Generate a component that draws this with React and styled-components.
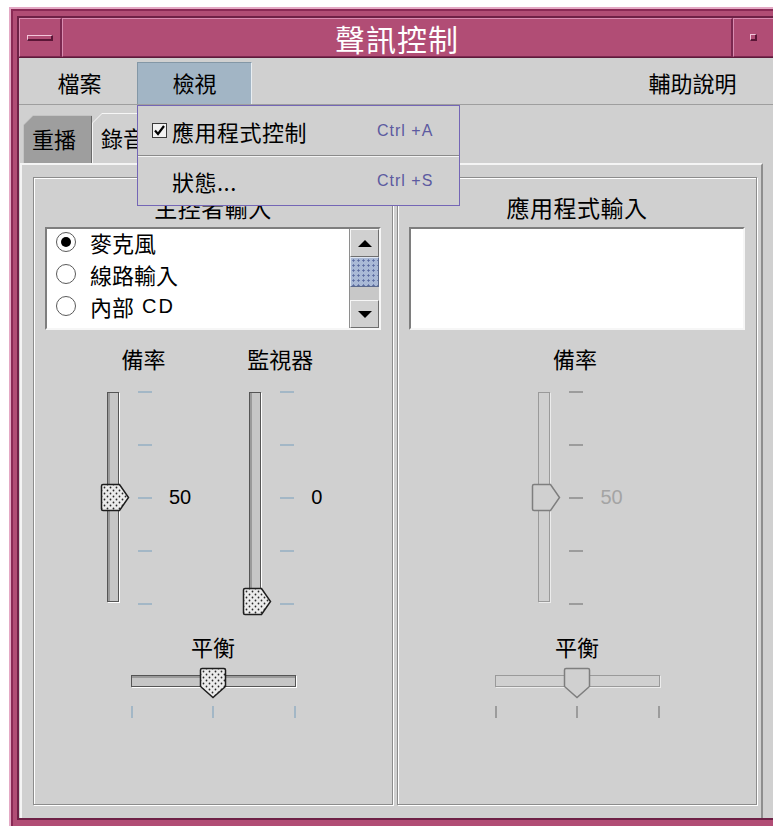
import React from 'react';
import styled, { createGlobalStyle } from 'styled-components';

const CJK = `"Noto Sans CJK TC", "Noto Sans CJK SC", sans-serif`;
const LATIN = `"Liberation Sans", "Noto Sans CJK TC", sans-serif`;

const GlobalStyle = createGlobalStyle`
  html, body {
    margin: 0;
    padding: 0;
    background: #ffffff;
    overflow: hidden;
  }
  body {
    font-family: ${CJK};
    color: #000;
  }
`;

// the window runs past the right edge of the page, as in the screenshot
const Window = styled.div`
  margin: 7px 0 0 9px;
  width: 800px;
  height: 822px;
  box-sizing: border-box;
  display: flex;
  background: #b14d75;
  border-top: 2px solid #e4a9c5;
  border-left: 2px solid #e4a9c5;
  box-shadow: inset 2px 2px 0 #8a2a55;
  padding: 7px 0 9px 6px;
`;

const Inner = styled.div`
  flex: 1;
  min-width: 0;
  display: flex;
  flex-direction: column;
  background: #d0d0d0;
  border-top: 2px solid #6e2146;
  border-left: 2px solid #6e2146;
  border-bottom: 2px solid #6e2146;
`;

const TitleBar = styled.div`
  height: 39px;
  display: flex;
  background: #b14d75;
  border-bottom: 1px solid #5e1a3a;
`;

const TitleButton = styled.div`
  width: ${p => p.$w}px;
  box-sizing: border-box;
  display: flex;
  align-items: center;
  justify-content: ${p => (p.$start ? 'flex-start' : 'center')};
  padding-left: ${p => (p.$start ? 16 : 0)}px;
  border-top: 1px solid #d98cb0;
  border-left: 1px solid #d98cb0;
  border-right: 2px solid #7c2850;
  border-bottom: 1px solid #7c2850;
`;

const MinBar = styled.span`
  width: 26px;
  height: 6px;
  box-sizing: border-box;
  border-top: 1px solid #f3c6da;
  border-left: 1px solid #f3c6da;
  border-right: 2px solid #5a1536;
  border-bottom: 2px solid #5a1536;
`;

const MaxDot = styled.span`
  width: 7px;
  height: 7px;
  box-sizing: border-box;
  border-top: 1px solid #f3c6da;
  border-left: 1px solid #f3c6da;
  border-right: 2px solid #5a1536;
  border-bottom: 2px solid #5a1536;
`;

const TitleText = styled.div`
  flex: 1;
  display: flex;
  align-items: center;
  justify-content: center;
  color: #ffffff;
  font-size: 30px;
  letter-spacing: 1px;
  border-top: 1px solid #d98cb0;
  border-left: 1px solid #d98cb0;
  border-right: 2px solid #7c2850;
  border-bottom: 1px solid #7c2850;
`;

const MenuBar = styled.div`
  height: 47px;
  box-sizing: border-box;
  display: flex;
  align-items: flex-end;
  padding-left: 3px;
  border-bottom: 1px solid #9e9e9e;
  position: relative;
  z-index: 5;
`;

const MenuItem = styled.div`
  position: relative;
  width: 115px;
  height: 42px;
  box-sizing: border-box;
  display: flex;
  align-items: center;
  justify-content: center;
  padding-bottom: 4px;
  font-size: 22px;
  margin-left: ${p => (p.$push ? 'auto' : '0')};
  margin-right: ${p => (p.$push ? '59px' : '0')};
  background: ${p => (p.$active ? '#a2b5c5' : 'transparent')};
  border-top: 1px solid ${p => (p.$active ? '#8397a6' : 'transparent')};
  border-left: 1px solid ${p => (p.$active ? '#8397a6' : 'transparent')};
  border-right: 1px solid ${p => (p.$active ? '#e8eef2' : 'transparent')};
`;

const Dropdown = styled.div`
  position: absolute;
  top: calc(100% + 1px);
  left: -1px;
  width: 323px;
  box-sizing: border-box;
  background: #d0d0d0;
  border: 1px solid #7466b6;
  display: flex;
  flex-direction: column;
`;

const DropItem = styled.div`
  height: 49px;
  display: flex;
  align-items: center;
  padding-left: ${p => (p.$indent ? 34 : 14)}px;
  font-size: 22px;
  border-top: ${p => (p.$sep ? '1px solid #8a8a8a' : 'none')};
  box-shadow: ${p => (p.$sep ? 'inset 0 1px 0 #f4f4f4' : 'none')};
`;

const CheckBox = styled.span`
  width: 15px;
  height: 15px;
  margin-right: 5px;
  display: flex;
`;

const DropLabel = styled.span`
  flex: 1;
  letter-spacing: 0.5px;
`;

const Shortcut = styled.span`
  width: 82px;
  font-family: ${LATIN};
  font-size: 16px;
  letter-spacing: 1px;
  color: #5c5aa0;
`;

const TabStrip = styled.div`
  height: 58px;
  display: flex;
  align-items: flex-end;
  padding-left: 4px;
`;

const Tab = styled.div`
  height: ${p => (p.$active ? 49 : 47)}px;
  padding: 1px 0 0 1px;
  background: ${p => (p.$active ? '#f6f6f6' : '#c4c4c4')};
  clip-path: polygon(0 10px, 10px 0, 100% 0, 100% 100%, 0 100%);
`;

const TabFace = styled.div`
  height: 100%;
  box-sizing: border-box;
  display: flex;
  align-items: center;
  padding: 0 15px 4px 8px;
  font-size: 22px;
  background: ${p => (p.$active ? '#d0d0d0' : '#9e9e9e')};
  border-right: 1px solid ${p => (p.$active ? '#7a7a7a' : '#6a6a6a')};
  clip-path: polygon(0 9px, 9px 0, 100% 0, 100% 100%, 0 100%);
`;

const Pane = styled.div`
  flex: 1;
  margin: 0 46px 0 1px;
  display: flex;
  gap: 4px;
  padding: 12px 4px 13px 11px;
  border-top: 2px solid #f4f4f4;
  border-left: 2px solid #f4f4f4;
  border-right: 2px solid #8e8e8e;
`;

const Group = styled.div`
  flex: 1;
  display: flex;
  flex-direction: column;
  padding: 16px 11px 0;
  border: 1px solid #8c8c8c;
  box-shadow: inset 1px 1px 0 #ffffff, 1px 1px 0 #ffffff;
`;

const GroupTitle = styled.div`
  height: 26px;
  line-height: 26px;
  text-align: center;
  font-size: 23px;
  letter-spacing: 0.5px;
`;

const ListBox = styled.div`
  margin-top: 7px;
  height: 103px;
  box-sizing: border-box;
  display: flex;
  background: #ffffff;
  border-top: 2px solid #7e7e7e;
  border-left: 2px solid #7e7e7e;
  border-bottom: 2px solid #f6f6f6;
  border-right: 2px solid #f6f6f6;
`;

const List = styled.div`
  flex: 1;
  display: flex;
  flex-direction: column;
  margin-top: -3px;
  padding-left: 9px;
`;

const ListRow = styled.div`
  height: 32px;
  display: flex;
  align-items: center;
  font-size: 22px;
`;

const Radio = styled.span`
  width: 20px;
  height: 20px;
  box-sizing: border-box;
  margin-right: 14px;
  border-radius: 50%;
  border: 1.5px solid #5a5a5a;
  display: flex;
  align-items: center;
  justify-content: center;
  &::after {
    content: '';
    width: 10px;
    height: 10px;
    border-radius: 50%;
    background: ${p => (p.$on ? '#000' : 'transparent')};
  }
`;

const CDText = styled.span`
  font-family: ${LATIN};
  font-size: 20px;
  margin-left: 8px;
  letter-spacing: 2px;
`;

const ScrollBar = styled.div`
  width: 29px;
  display: flex;
  flex-direction: column;
  background: #c4c4c4;
  border-left: 1px solid #8e8e8e;
`;

const ScrollButton = styled.div`
  height: 28px;
  box-sizing: border-box;
  display: flex;
  align-items: center;
  justify-content: center;
  background: #d0d0d0;
  border-top: 1px solid #f6f6f6;
  border-left: 1px solid #f6f6f6;
  border-right: 1px solid #6e6e6e;
  border-bottom: 1px solid #6e6e6e;
  &::after {
    content: '';
    border-left: 7px solid transparent;
    border-right: 7px solid transparent;
    ${p => (p.$down ? 'border-top: 7px solid #000;' : 'border-bottom: 7px solid #000;')}
  }
`;

const ScrollThumb = styled.div`
  height: 30px;
  box-sizing: border-box;
  background-color: #a9b9d6;
  background-image: radial-gradient(#5a6aa0 0.9px, transparent 1.3px);
  background-size: 5px 5px;
  border-top: 1px solid #dfe6f2;
  border-left: 1px solid #dfe6f2;
  border-right: 1px solid #5c6a8c;
  border-bottom: 1px solid #5c6a8c;
`;

const ScrollTrack = styled.div`
  flex: 1;
  background: #c8c8c8;
`;

const SliderRow = styled.div`
  margin-top: 16px;
  display: flex;
  align-items: flex-start;
  justify-content: ${p => (p.$center ? 'center' : 'flex-start')};
  padding-left: ${p => (p.$center ? 0 : 55)}px;
  gap: 51px;
`;

const SliderBlock = styled.div`
  display: flex;
  flex-direction: column;
`;

const SliderLabel = styled.div`
  height: 24px;
  line-height: 24px;
  text-align: center;
  font-size: 22px;
  padding-right: 4px;
  white-space: nowrap;
`;

const SliderBody = styled.div`
  margin-top: 22px;
  height: 212px;
  display: flex;
  align-items: flex-start;
`;

const TrackArea = styled.div`
  position: relative;
  width: 30px;
  height: 212px;
`;

const VTrack = styled.div`
  margin-left: 7px;
  width: 12px;
  height: 210px;
  box-sizing: border-box;
  background: ${p => (p.$off ? '#d0d0d0' : '#c6c6c6')};
  border: 1px solid ${p => (p.$off ? '#9a9a9a' : '#555555')};
  box-shadow: ${p => (p.$off ? '1px 1px 0 #ececec' : 'inset 2px 0 0 #9a9a9a, 1px 1px 0 #ffffff')};
`;

const ThumbSpot = styled.div`
  position: absolute;
  left: 0;
  line-height: 0;
`;

const Ticks = styled.div`
  margin: -1px 0 0 8px;
  width: 14px;
  height: 214px;
  display: flex;
  flex-direction: column;
  justify-content: space-between;
`;

const Tick = styled.span`
  display: block;
  width: 14px;
  height: 2px;
  background: ${p => (p.$off ? '#9c9c9c' : '#a3b7c6')};
`;

const Value = styled.div`
  margin-left: 17px;
  height: 210px;
  display: flex;
  align-items: center;
  font-family: ${LATIN};
  font-size: 20px;
  color: ${p => (p.$off ? '#a4a4a4' : '#000')};
`;

const BalanceLabel = styled.div`
  margin-top: 30px;
  height: 24px;
  line-height: 24px;
  text-align: center;
  font-size: 22px;
`;

const HSlider = styled.div`
  position: relative;
  align-self: center;
  margin-top: 9px;
  width: 165px;
  height: 31px;
`;

const HTrack = styled.div`
  margin-top: 8px;
  height: 12px;
  box-sizing: border-box;
  background: ${p => (p.$off ? '#d0d0d0' : '#c6c6c6')};
  border: 1px solid ${p => (p.$off ? '#9a9a9a' : '#555555')};
  box-shadow: ${p => (p.$off ? '1px 1px 0 #ececec' : 'inset 0 2px 0 #9a9a9a, 1px 1px 0 #ffffff')};
`;

const HTicks = styled.div`
  align-self: center;
  margin-top: 8px;
  width: 165px;
  height: 12px;
  display: flex;
  justify-content: space-between;
`;

const HTick = styled.span`
  width: 2px;
  height: 12px;
  background: ${p => (p.$off ? '#9c9c9c' : '#a3b7c6')};
`;

function Dots({ id }) {
  return (
    <pattern id={id} width="6" height="6" patternUnits="userSpaceOnUse">
      <rect width="6" height="6" fill="#ececec" />
      <circle cx="1.5" cy="1.5" r="0.9" fill="#2a2a2a" />
      <circle cx="4.5" cy="4.5" r="0.9" fill="#2a2a2a" />
    </pattern>
  );
}

function VThumb({ id, off }) {
  return (
    <svg width="30" height="29" viewBox="0 0 30 29">
      <defs><Dots id={id} /></defs>
      <path
        d="M1.5 3 Q1.5 1.5 3 1.5 H19.5 L28.5 14.5 L19.5 27.5 H3 Q1.5 27.5 1.5 26 Z"
        fill={off ? '#d0d0d0' : `url(#${id})`}
        stroke={off ? '#7e7e7e' : '#1e1e1e'}
        strokeWidth="1.5"
      />
    </svg>
  );
}

function HThumb({ id, off }) {
  return (
    <svg width="28" height="32" viewBox="0 0 28 32">
      <defs><Dots id={id} /></defs>
      <path
        d="M3 1.5 H25 Q26.5 1.5 26.5 3 V19.5 L14 30.5 L1.5 19.5 V3 Q1.5 1.5 3 1.5 Z"
        fill={off ? '#d0d0d0' : `url(#${id})`}
        stroke={off ? '#7e7e7e' : '#1e1e1e'}
        strokeWidth="1.5"
      />
    </svg>
  );
}

function VSlider({ label, value, off, id }) {
  const tip = 1 + (1 - value / 100) * 208;
  return (
    <SliderBlock>
      <SliderLabel>{label}</SliderLabel>
      <SliderBody>
        <TrackArea>
          <VTrack $off={off} />
          <ThumbSpot style={{ top: tip - 14 }}>
            <VThumb id={id} off={off} />
          </ThumbSpot>
        </TrackArea>
        <Ticks>
          {[0, 1, 2, 3, 4].map(i => <Tick key={i} $off={off} />)}
        </Ticks>
        <Value $off={off}>{value}</Value>
      </SliderBody>
    </SliderBlock>
  );
}

function Balance({ value, off, id }) {
  const x = 1 + (value / 100) * 162;
  return (
    <>
      <BalanceLabel>平衡</BalanceLabel>
      <HSlider>
        <HTrack $off={off} />
        <ThumbSpot style={{ top: 0, left: x - 14 }}>
          <HThumb id={id} off={off} />
        </ThumbSpot>
      </HSlider>
      <HTicks>
        <HTick $off={off} />
        <HTick $off={off} />
        <HTick $off={off} />
      </HTicks>
    </>
  );
}

function App() {
  return (
    <>
      <GlobalStyle />
      <Window>
        <Inner>
          <TitleBar>
            <TitleButton $w={43}><MinBar /></TitleButton>
            <TitleText>聲訊控制</TitleText>
            <TitleButton $w={76} $start><MaxDot /></TitleButton>
          </TitleBar>

          <MenuBar>
            <MenuItem>檔案</MenuItem>
            <MenuItem $active>
              檢視
              <Dropdown>
                <DropItem>
                  <CheckBox>
                    <svg width="15" height="15" viewBox="0 0 15 15">
                      <rect x="0.5" y="0.5" width="14" height="14" fill="#f2f2f2" stroke="#3a3a3a" />
                      <path d="M3 7.5 L6 11 L12 3" fill="none" stroke="#000" strokeWidth="2.2" />
                    </svg>
                  </CheckBox>
                  <DropLabel>應用程式控制</DropLabel>
                  <Shortcut>Ctrl +A</Shortcut>
                </DropItem>
                <DropItem $indent $sep>
                  <DropLabel>狀態...</DropLabel>
                  <Shortcut>Ctrl +S</Shortcut>
                </DropItem>
              </Dropdown>
            </MenuItem>
            <MenuItem $push>輔助說明</MenuItem>
          </MenuBar>

          <TabStrip>
            <Tab><TabFace>重播</TabFace></Tab>
            <Tab $active><TabFace $active>錄音</TabFace></Tab>
          </TabStrip>

          <Pane>
            <Group>
              <GroupTitle>主控者輸入</GroupTitle>
              <ListBox>
                <List>
                  <ListRow><Radio $on />麥克風</ListRow>
                  <ListRow><Radio />線路輸入</ListRow>
                  <ListRow><Radio />內部<CDText>CD</CDText></ListRow>
                </List>
                <ScrollBar>
                  <ScrollButton />
                  <ScrollThumb />
                  <ScrollTrack />
                  <ScrollButton $down />
                </ScrollBar>
              </ListBox>
              <SliderRow>
                <VSlider label="備率" value={50} id="vt1" />
                <VSlider label="監視器" value={0} id="vt2" />
              </SliderRow>
              <Balance value={50} id="ht1" />
            </Group>

            <Group>
              <GroupTitle>應用程式輸入</GroupTitle>
              <ListBox />
              <SliderRow $center>
                <VSlider label="備率" value={50} off id="vt3" />
              </SliderRow>
              <Balance value={50} off id="ht2" />
            </Group>
          </Pane>
        </Inner>
      </Window>
    </>
  );
}

export default App;
